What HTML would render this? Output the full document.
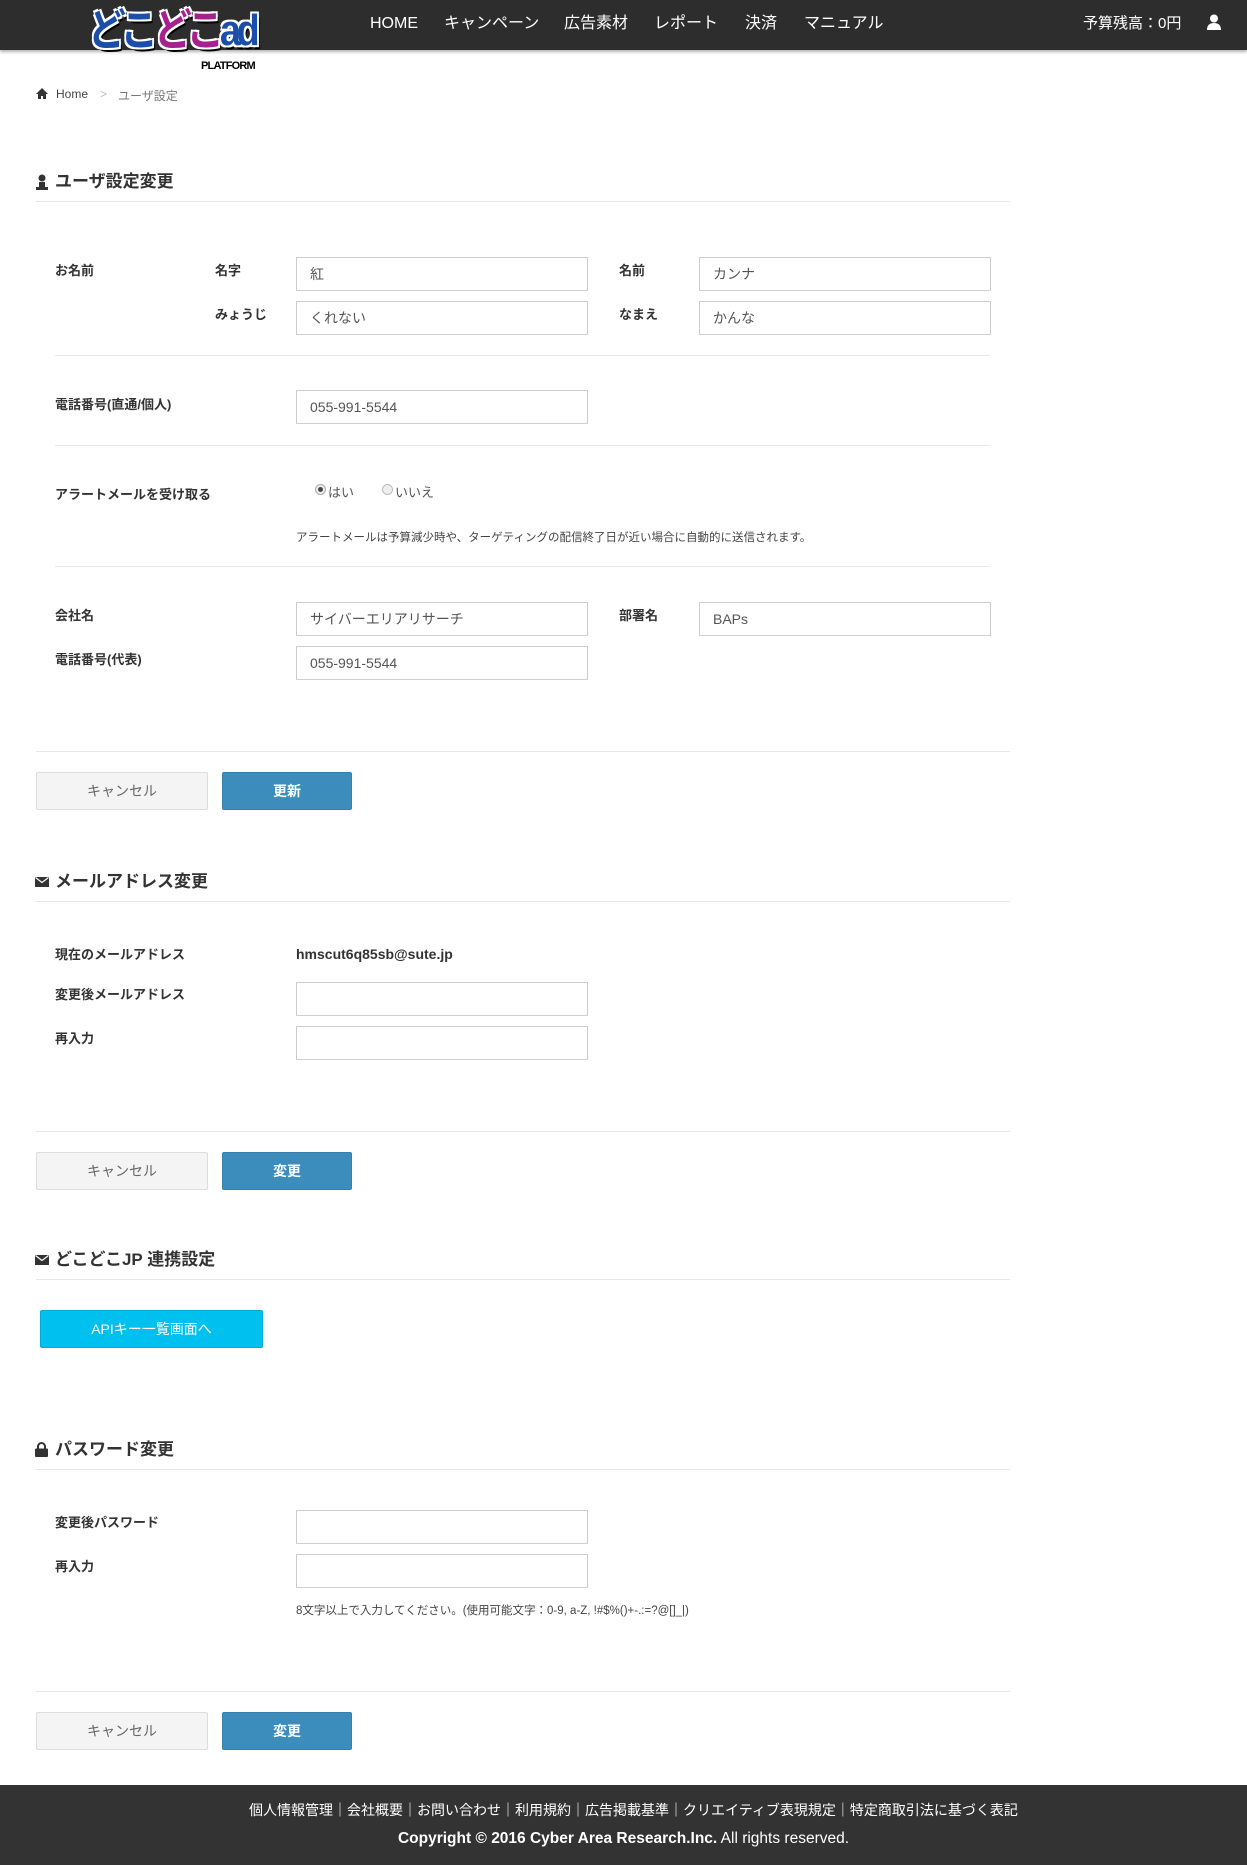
<!DOCTYPE html>
<html><head><meta charset="utf-8"><style>
*{margin:0;padding:0;box-sizing:border-box}
body{width:1247px;height:1865px;position:relative;background:#fff;font-family:"Liberation Sans","Noto Sans CJK JP",sans-serif;color:#333;overflow:hidden}
.a{position:absolute;white-space:nowrap}
.hdr{position:absolute;left:0;top:0;width:1247px;height:50px;background:#2d2d2d;box-shadow:0 2px 3px rgba(0,0,0,.3)}
.nav{color:#fff;font-size:16px;top:14px;line-height:20px;height:20px}
.lbl{font-size:13px;font-weight:bold;line-height:16px}
.inp{position:absolute;border:1px solid #ccc;border-bottom-color:#d0d0d8;height:34px;width:292px;font-size:14px;color:#555;padding:8px 13px;line-height:16px}
.hr{position:absolute;height:1px;background:#e8e8e8}
.h2{font-size:17px;font-weight:bold;line-height:20px}
.btn{position:absolute;height:38px;font-size:14px;text-align:center;line-height:36px;border-radius:2px}
.cn{background:#f4f4f4;border:1px solid #ddd;color:#666;width:172px}
.ok{background:#3c8dbc;border:1px solid #367fa9;color:#fff;width:130px;font-weight:bold}
.sm{font-size:11.5px;color:#444}
</style></head><body>
<div class="hdr"></div>
<div class="a" style="left:88px;top:6px;font-size:44px;font-weight:bold;line-height:50px;letter-spacing:-5px;transform:scaleX(0.86);transform-origin:left top;text-shadow:0 0 3px #fff,2px 2px 0 #fff,-2px -2px 0 #fff,2px -2px 0 #fff,-2px 2px 0 #fff,3px 4px 0 #000"><span style="color:#1a4ea8">どこ</span><span style="color:#a6208f">どこ</span><span style="color:#1a4ea8">ad</span></div>
<div class="a" style="left:201px;top:60px;font-size:11px;font-weight:bold;color:#000;letter-spacing:-0.8px">PLATFORM</div>
<div class="a nav" style="left:370px">HOME</div>
<div class="a nav" style="left:444px">キャンペーン</div>
<div class="a nav" style="left:564px">広告素材</div>
<div class="a nav" style="left:654px">レポート</div>
<div class="a nav" style="left:745px">決済</div>
<div class="a nav" style="left:804px">マニュアル</div>
<div class="a nav" style="left:1083px;font-size:15px">予算残高：0円</div>
<svg class="a" style="left:1207px;top:14px" width="14" height="16" viewBox="0 0 14 16"><circle cx="7" cy="4.5" r="4" fill="#fff"/><path d="M0 16 Q0 9 7 9 Q14 9 14 16Z" fill="#fff"/></svg>

<svg class="a" style="left:36px;top:88px" width="12" height="11" viewBox="0 0 12 11"><path d="M6 0L0 6h2v5h3V8h2v3h3V6h2z" fill="#333"/></svg>
<div class="a" style="left:56px;top:87px;font-size:12px;color:#444">Home</div>
<div class="a" style="left:100px;top:87px;font-size:12px;color:#bbb">&gt;</div>
<div class="a" style="left:118px;top:87px;font-size:12px;color:#777">ユーザ設定</div>

<svg class="a" style="left:36px;top:174px" width="12" height="16" viewBox="0 0 12 16"><circle cx="6" cy="4" r="3.5" fill="#333"/><path d="M3 8h6v5h3v3H0v-3h3z" fill="#333"/></svg>
<div class="a h2" style="left:55px;top:172px">ユーザ設定変更</div>
<div class="hr" style="left:36px;top:201px;width:974px"></div>

<div class="a lbl" style="left:55px;top:263px">お名前</div>
<div class="a lbl" style="left:215px;top:263px">名字</div>
<div class="inp" style="left:296px;top:257px">紅</div>
<div class="a lbl" style="left:619px;top:263px">名前</div>
<div class="inp" style="left:699px;top:257px">カンナ</div>
<div class="a lbl" style="left:215px;top:307px">みょうじ</div>
<div class="inp" style="left:296px;top:301px">くれない</div>
<div class="a lbl" style="left:619px;top:307px">なまえ</div>
<div class="inp" style="left:699px;top:301px">かんな</div>
<div class="hr" style="left:55px;top:355px;width:935px"></div>

<div class="a lbl" style="left:55px;top:397px">電話番号(直通/個人)</div>
<div class="inp" style="left:296px;top:390px">055-991-5544</div>
<div class="hr" style="left:55px;top:445px;width:935px"></div>

<div class="a lbl" style="left:55px;top:487px">アラートメールを受け取る</div>
<div class="a" style="left:315px;top:484px;width:11px;height:11px;border-radius:50%;border:1px solid #aaa;background:#eee"><div style="position:absolute;left:2px;top:2px;width:5px;height:5px;border-radius:50%;background:#444"></div></div>
<div class="a" style="left:328px;top:482px;font-size:13px;color:#555">はい</div>
<div class="a" style="left:382px;top:484px;width:11px;height:11px;border-radius:50%;border:1px solid #bbb;background:#eee"></div>
<div class="a" style="left:395px;top:482px;font-size:13px;color:#555">いいえ</div>
<div class="a sm" style="left:296px;top:529px">アラートメールは予算減少時や、ターゲティングの配信終了日が近い場合に自動的に送信されます。</div>
<div class="hr" style="left:55px;top:566px;width:935px"></div>

<div class="a lbl" style="left:55px;top:608px">会社名</div>
<div class="inp" style="left:296px;top:602px">サイバーエリアリサーチ</div>
<div class="a lbl" style="left:619px;top:608px">部署名</div>
<div class="inp" style="left:699px;top:602px">BAPs</div>
<div class="a lbl" style="left:55px;top:652px">電話番号(代表)</div>
<div class="inp" style="left:296px;top:646px">055-991-5544</div>
<div class="hr" style="left:36px;top:751px;width:974px"></div>
<div class="btn cn" style="left:36px;top:772px">キャンセル</div>
<div class="btn ok" style="left:222px;top:772px">更新</div>

<svg class="a" style="left:35px;top:877px" width="14" height="10" viewBox="0 0 14 10"><rect width="14" height="10" fill="#333"/><path d="M0.5 0.5L7 5.5L13.5 0.5" stroke="#fff" stroke-width="1.2" fill="none"/></svg>
<div class="a h2" style="left:55px;top:872px">メールアドレス変更</div>
<div class="hr" style="left:36px;top:901px;width:974px"></div>
<div class="a lbl" style="left:55px;top:947px">現在のメールアドレス</div>
<div class="a" style="left:296px;top:946px;font-size:14px;font-weight:bold;color:#333">hmscut6q85sb@sute.jp</div>
<div class="a lbl" style="left:55px;top:987px">変更後メールアドレス</div>
<div class="inp" style="left:296px;top:982px"></div>
<div class="a lbl" style="left:55px;top:1031px">再入力</div>
<div class="inp" style="left:296px;top:1026px"></div>
<div class="hr" style="left:36px;top:1131px;width:974px"></div>
<div class="btn cn" style="left:36px;top:1152px">キャンセル</div>
<div class="btn ok" style="left:222px;top:1152px">変更</div>

<svg class="a" style="left:35px;top:1255px" width="14" height="10" viewBox="0 0 14 10"><rect width="14" height="10" fill="#333"/><path d="M0.5 0.5L7 5.5L13.5 0.5" stroke="#fff" stroke-width="1.2" fill="none"/></svg>
<div class="a h2" style="left:55px;top:1250px">どこどこJP 連携設定</div>
<div class="hr" style="left:36px;top:1279px;width:974px"></div>
<div class="btn" style="left:40px;top:1310px;width:223px;background:#00c0ef;border:1px solid #00acd6;color:#fff;font-size:14px">APIキー一覧画面へ</div>

<svg class="a" style="left:35px;top:1442px" width="13" height="15" viewBox="0 0 13 15"><path d="M3 7V4.5a3.5 3.5 0 0 1 7 0V7" stroke="#333" stroke-width="2" fill="none"/><rect y="6.5" width="13" height="8.5" rx="1" fill="#333"/></svg>
<div class="a h2" style="left:55px;top:1440px">パスワード変更</div>
<div class="hr" style="left:36px;top:1469px;width:974px"></div>
<div class="a lbl" style="left:55px;top:1515px">変更後パスワード</div>
<div class="inp" style="left:296px;top:1510px"></div>
<div class="a lbl" style="left:55px;top:1559px">再入力</div>
<div class="inp" style="left:296px;top:1554px"></div>
<div class="a sm" style="left:296px;top:1602px">8文字以上で入力してください。(使用可能文字：0-9, a-Z, !#$%()+-.:=?@[]_|)</div>
<div class="hr" style="left:36px;top:1691px;width:974px"></div>
<div class="btn cn" style="left:36px;top:1712px">キャンセル</div>
<div class="btn ok" style="left:222px;top:1712px">変更</div>

<div class="a" style="left:0;top:1785px;width:1247px;height:80px;background:#333"></div>
<div class="a" style="left:0;top:1800px;width:1247px;text-align:center;color:#fff;font-size:14px;padding-left:20px">個人情報管理｜会社概要｜お問い合わせ｜利用規約｜広告掲載基準｜クリエイティブ表現規定｜特定商取引法に基づく表記</div>
<div class="a" style="left:0;top:1830px;width:1247px;text-align:center;color:#fff;font-size:15.5px"><b>Copyright © 2016 Cyber Area Research.Inc.</b> All rights reserved.</div>
</body></html>
